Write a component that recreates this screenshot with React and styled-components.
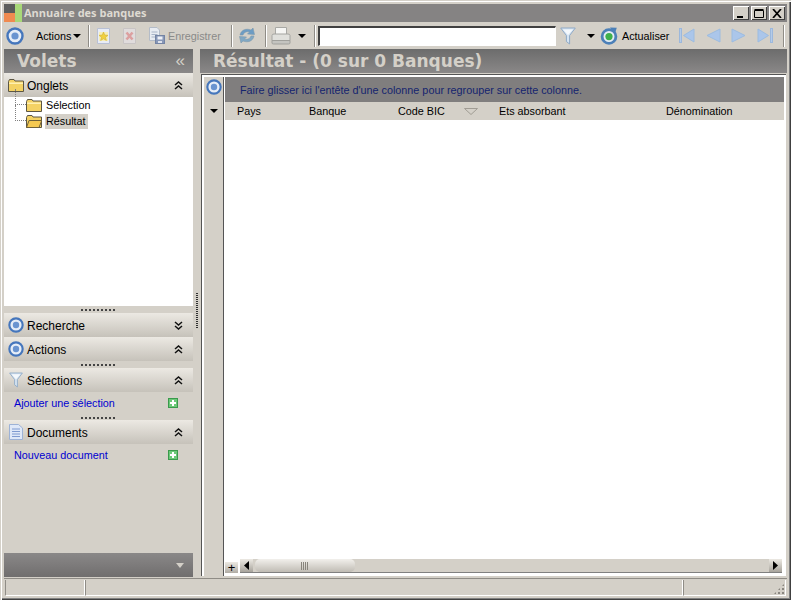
import styled, { createGlobalStyle } from 'styled-components';

const GlobalStyle = createGlobalStyle`
    html, body { margin: 0; padding: 0; background: #d4d0c8; }
    body { font-family: "Liberation Sans", Arial, sans-serif; font-size: 10.8px; color: #000; overflow: hidden; }
`;

const Target = ({ size = 18 }) => (
    <svg width={size} height={size} viewBox="0 0 18 18">
        <circle cx="9" cy="9" r="7.5" fill="#e6edf7" stroke="#4576bc" strokeWidth="2.4" />
        <circle cx="9" cy="9" r="3.6" fill="#6a94d0" />
    </svg>
);

const Folder = ({ open }) => (
    <svg width="16" height="13" viewBox="0 0 16 13">
        <path d="M.5 2.5 L1.5 .5 H6 L7 2 H15.5 V12.5 H.5Z" fill="#f4d264" stroke="#5c5644" />
        {open
            ? <path d="M3 5.5 H15.8 L13 12.5 H.5Z" fill="#f4c850" stroke="#6e6038" />
            : <path d="M1 3.5 H15 V5 H1Z" fill="#fff0b0" />}
    </svg>
);

const Funnel = ({ size = 16 }) => (
    <svg width={size} height={size + 2} viewBox="0 0 16 18">
        <path d="M.7 1 H15.3 L9.6 8.5 V17 L6.4 14.5 V8.5Z" fill="#d6e4f2" stroke="#8fa9c6" />
        <path d="M3 2.5 H13 L8 8Z" fill="#f4f8fc" />
    </svg>
);

const DocIcon = () => (
    <svg width="14" height="16" viewBox="0 0 14 16">
        <path d="M.5 .5 H9.5 L13.5 4 V15.5 H.5Z" fill="#dfe8f8" stroke="#9db2d6" />
        <path d="M3 5 H11 M3 7.5 H11 M3 10 H11 M3 12.5 H11" stroke="#7f9ad0" />
    </svg>
);

const PlusBox = () => (
    <svg width="10" height="10" viewBox="0 0 10 10">
        <rect width="10" height="10" fill="#3a9a4c" />
        <path d="M1 1 H9 V9 H1Z" fill="#6cc878" />
        <path d="M5 2 V8 M2 5 H8" stroke="#fff" strokeWidth="2" />
    </svg>
);

const Chevrons = ({ dir = 'up', color = '#111' }) => (
    <svg width="9" height="9" viewBox="0 0 9 9" style={{ transform: dir === 'up' ? 'none' : 'scaleY(-1)' }}>
        <path d="M1 4 L4.5 1 L8 4 M1 8 L4.5 5 L8 8" fill="none" stroke={color} strokeWidth="1.5" />
    </svg>
);

const Caret = () => (
    <svg width="8" height="4" viewBox="0 0 8 4"><path d="M0 0 H8 L4 4Z" fill="#000" /></svg>
);

const NewDoc = () => (
    <svg width="15" height="16" viewBox="0 0 15 16">
        <path d="M1.5 .5 H13.5 V15.5 H1.5Z" fill="#e8ecf6" stroke="#b8c0d4" />
        <rect x="3" y="4" width="9" height="9" fill="#f6eeb8" />
        <path d="M7.5 4 L8.8 7 L12 7.3 L9.6 9.3 L10.4 12.5 L7.5 10.8 L4.6 12.5 L5.4 9.3 L3 7.3 L6.2 7Z" fill="#f0d040" stroke="#c8a830" strokeWidth=".5" />
    </svg>
);

const DeleteDoc = () => (
    <svg width="15" height="16" viewBox="0 0 15 16">
        <path d="M1.5 .5 H13.5 V15.5 H1.5Z" fill="#e0dcdc" stroke="#c8c4c4" />
        <path d="M4.5 4.5 L10.5 11.5 M10.5 4.5 L4.5 11.5" stroke="#dca0a0" strokeWidth="2.6" />
    </svg>
);

const SaveDocs = () => (
    <svg width="16" height="17" viewBox="0 0 16 17">
        <path d="M.5 .5 H8 L10.5 3 V13.5 H.5Z" fill="#e8ecf2" stroke="#b4bcc8" />
        <path d="M2.5 5 H8.5 M2.5 7.5 H8.5 M2.5 10 H6" stroke="#a8b4c8" />
        <rect x="6.5" y="8.5" width="9" height="8" fill="#8898b8" stroke="#7484a4" />
        <rect x="8.5" y="9.5" width="5" height="3" fill="#eef0f6" />
        <rect x="9" y="14" width="4" height="2" fill="#dfe3ec" />
    </svg>
);

const Sync = () => (
    <svg width="18" height="17" viewBox="0 0 18 17">
        <path d="M2 8 C3 3 8 1 13 3 L15 1 L16.5 7.5 L9.5 7 L11.5 5 C8 4 6 5.5 5 8Z" fill="#6c9cc4" stroke="#7c98ac" strokeWidth=".6" />
        <path d="M16 9 C15 14 10 16 5 14 L3 16 L1.5 9.5 L8.5 10 L6.5 12 C10 13 12 11.5 13 9Z" fill="#80a8c4" stroke="#7c98ac" strokeWidth=".6" />
    </svg>
);

const Printer = () => (
    <svg width="20" height="18" viewBox="0 0 20 18">
        <path d="M4.5 .5 H15.5 V7.5 H4.5Z" fill="#f6f6f4" stroke="#a8a8a4" />
        <path d="M1 8.5 Q1 7 3 7 H17 Q19 7 19 8.5 V13.5 H1Z" fill="#e0e0dc" stroke="#a4a4a0" />
        <path d="M1 13.5 H19 V16 Q19 17 17.5 17 H2.5 Q1 17 1 16Z" fill="#c4c4c0" stroke="#a0a09c" />
    </svg>
);

const Refresh = () => (
    <svg width="18" height="18" viewBox="0 0 18 18">
        <circle cx="9" cy="9.5" r="6.9" fill="#e4ecf4" stroke="#4c80b8" strokeWidth="2.8" />
        <path d="M10 .4 L16.8 .8 L14.8 7Z" fill="#4c80b8" />
        <circle cx="9" cy="9.6" r="3.6" fill="#3eb04c" />
    </svg>
);

const Nav = ({ flip, bar }) => (
    <svg width="16" height="15" viewBox="0 0 16 15" style={{ transform: flip ? 'scaleX(-1)' : 'none' }}>
        {bar && <rect x=".5" y=".5" width="2" height="14" fill="#b4cbe8" stroke="#9cb8dc" />}
        <path d={bar ? 'M15 1 V14 L4.5 7.5Z' : 'M15 1 V14 L2 7.5Z'} fill="#abc6ea" stroke="#9cbce0" />
    </svg>
);

const WinGlyph = ({ kind }) => (
    <svg width="10" height="9" viewBox="0 0 10 9">
        {kind === 'min' && <rect x="1" y="7" width="6" height="2" fill="#000" />}
        {kind === 'max' && <path d="M.5 1.5 H9.5 V8.5 H.5Z M.5 .5 H9.5" fill="none" stroke="#000" />}
        {kind === 'close' && <path d="M1 0 L9 9 M9 0 L1 9" stroke="#000" strokeWidth="1.7" />}
    </svg>
);

const AppIcon = () => (
    <svg width="18" height="18" viewBox="0 0 18 18">
        <rect width="6" height="18" y="0" fill="#5e5e5e" />
        <rect x="0" y="9" width="11" height="9" fill="#f08a50" />
        <rect x="6" y="0" width="5" height="9" fill="#5a5a5a" />
        <rect x="11" y="0" width="7" height="18" fill="#a8d878" />
    </svg>
);

export default function App() {
    return (
        <Window>
            <GlobalStyle />
            <TitleBar>
                <AppIcon />
                <TitleText>Annuaire des banques</TitleText>
                <WinButtons>
                    <WinButton><WinGlyph kind="min" /></WinButton>
                    <WinButton><WinGlyph kind="max" /></WinButton>
                    <WinButton><WinGlyph kind="close" /></WinButton>
                </WinButtons>
            </TitleBar>

            <Toolbar>
                <Tool $at={2}><Target /></Tool>
                <ToolLabel $at={12} $w={36}>Actions</ToolLabel>
                <Tool $at={1}><Caret /></Tool>
                <ToolSep $at={7} />
                <Tool $at={7}><NewDoc /></Tool>
                <Tool $at={11}><DeleteDoc /></Tool>
                <Tool $at={12}><SaveDocs /></Tool>
                <ToolLabel $at={3} $w={54} $muted>Enregistrer</ToolLabel>
                <ToolSep $at={9} />
                <Tool $at={6}><Sync /></Tool>
                <ToolSep $at={9} />
                <Tool $at={5}><Printer /></Tool>
                <Tool $at={7}><Caret /></Tool>
                <ToolSep $at={8} />
                <SearchInput />
                <Tool $at={4}><Funnel /></Tool>
                <Tool $at={11}><Caret /></Tool>
                <Tool $at={5}><Refresh /></Tool>
                <ToolLabel $at={4} $w={48}>Actualiser</ToolLabel>
                <Tool $at={9}><Nav bar /></Tool>
                <Tool $at={10}><Nav /></Tool>
                <Tool $at={10}><Nav flip /></Tool>
                <Tool $at={10}><Nav flip bar /></Tool>
                <ToolSep $at={10} />
            </Toolbar>

            <Main>
                <LeftPane>
                    <PaneHeader>
                        <PaneTitle>Volets</PaneTitle>
                        <Collapse>«</Collapse>
                    </PaneHeader>

                    <Group icon={<Folder />} label="Onglets" />
                    <Tree>
                        <TreeRow>
                            <Folder />
                            <TreeLabel>Sélection</TreeLabel>
                        </TreeRow>
                        <TreeRow>
                            <Folder open />
                            <TreeLabel $selected>Résultat</TreeLabel>
                        </TreeRow>
                    </Tree>

                    <Grip />
                    <Group icon={<Target size={16} />} label="Recherche" dir="down" />
                    <Group icon={<Target size={16} />} label="Actions" />
                    <Grip />
                    <Group icon={<Funnel size={14} />} label="Sélections" />
                    <LinkRow>
                        <PaneLink>Ajouter une sélection</PaneLink>
                        <PlusBox />
                    </LinkRow>
                    <Grip $short />
                    <Group icon={<DocIcon />} label="Documents" />
                    <LinkRow>
                        <PaneLink>Nouveau document</PaneLink>
                        <PlusBox />
                    </LinkRow>

                    <BottomBar>
                        <Arrow />
                    </BottomBar>
                </LeftPane>

                <Splitter><SplitterDots /></Splitter>

                <RightPane>
                    <PaneHeader>
                        <ResultTitle>Résultat - (0 sur 0 Banques)</ResultTitle>
                    </PaneHeader>
                    <GridFrame>
                        <Gutter>
                            <GutterTop><Target size={16} /></GutterTop>
                            <GutterCaret><Caret /></GutterCaret>
                        </Gutter>
                        <GridBody>
                            <GroupPanel>Faire glisser ici l'entête d'une colonne pour regrouper sur cette colonne.</GroupPanel>
                            <HeaderRow>
                                <span>Pays</span>
                                <span>Banque</span>
                                <SortCell>
                                    <span>Code BIC</span>
                                    <SortMark viewBox="0 0 14 7" width="14" height="7">
                                        <path d="M.5 .5 H13.5 L7 6.5Z" fill="#d4d0c8" stroke="#a09c94" />
                                    </SortMark>
                                </SortCell>
                                <span>Ets absorbant</span>
                                <span>Dénomination</span>
                            </HeaderRow>
                            <Rows />
                            <ScrollRow>
                                <ExpandButton>+</ExpandButton>
                                <ScrollBar>
                                    <ScrollButton>
                                        <svg width="5" height="9" viewBox="0 0 5 9"><path d="M5 0 V9 L0 4.5Z" fill="#000" /></svg>
                                    </ScrollButton>
                                    <ScrollThumb>
                                        <ThumbGrip />
                                    </ScrollThumb>
                                    <ScrollTrack />
                                    <ScrollButton>
                                        <svg width="5" height="9" viewBox="0 0 5 9"><path d="M0 0 V9 L5 4.5Z" fill="#000" /></svg>
                                    </ScrollButton>
                                </ScrollBar>
                            </ScrollRow>
                        </GridBody>
                    </GridFrame>
                </RightPane>
            </Main>

            <StatusBar>
                <StatusCell $w={80} />
                <StatusCell $w={598} />
                <StatusCell $w={103}>
                    <ResizeGrip />
                </StatusCell>
            </StatusBar>
        </Window>
    );
}

const Group = ({ icon, label, dir = 'up' }) => (
    <GroupHeader>
        <GroupIcon>{icon}</GroupIcon>
        <GroupLabel>{label}</GroupLabel>
        <Chevrons dir={dir} />
    </GroupHeader>
);

const Window = styled.div`
    box-sizing: border-box;
    width: 791px;
    height: 600px;
    padding: 4px;
    display: flex;
    flex-direction: column;
    background: #d4d0c8;
    box-shadow: inset 1px 1px 0 #d4d0c8, inset 2px 2px 0 #fff, inset -1px -1px 0 #404040, inset -2px -2px 0 #808080;
`;

const TitleBar = styled.div`
    height: 18px;
    flex: none;
    display: flex;
    align-items: center;
    background: #858383;
    color: #d8d4cc;
`;

const TitleText = styled.span`
    margin-left: 2px;
    margin-top: -2px;
    font-family: "Open Sans", "Liberation Sans", sans-serif;
    font-weight: 700;
    font-size: 11px;
    color: #dedad2;
`;

const WinButtons = styled.div`
    margin-left: auto;
    margin-right: 2px;
    display: flex;
    gap: 2px;
`;

const WinButton = styled.div`
    width: 16px;
    height: 14px;
    display: flex;
    align-items: center;
    justify-content: center;
    background: #d4d0c8;
    box-shadow: inset 1px 1px 0 #fff, inset -1px -1px 0 #404040;
`;

const Toolbar = styled.div`
    height: 27px;
    flex: none;
    display: flex;
    align-items: center;
`;

const Tool = styled.div`
    margin-left: ${(p) => p.$at}px;
    display: flex;
    align-items: center;
`;

const ToolLabel = styled.span`
    margin-left: ${(p) => p.$at}px;
    width: ${(p) => p.$w}px;
    color: ${(p) => (p.$muted ? '#8a8a88' : '#000')};
    white-space: nowrap;
`;

const ToolSep = styled.div`
    margin-left: ${(p) => p.$at}px;
    width: 1px;
    height: 22px;
    background: #8f8c86;
    box-shadow: 1px 0 0 #fff;
`;

const SearchInput = styled.div`
    margin-left: 3px;
    box-sizing: border-box;
    width: 238px;
    height: 20px;
    background: #fff;
    border: 1px solid #fff;
    border-top: 2px solid #404040;
    border-left: 2px solid #404040;
`;

const Main = styled.div`
    flex: 1;
    min-height: 0;
    display: flex;
`;

const LeftPane = styled.div`
    width: 189px;
    flex: none;
    display: flex;
    flex-direction: column;
`;

const Splitter = styled.div`
    width: 7px;
    flex: none;
    display: flex;
    align-items: center;
    justify-content: center;
`;

const SplitterDots = styled.div`
    width: 2px;
    height: 36px;
    background: repeating-linear-gradient(to bottom, #303030 0 1px, transparent 1px 2px);
    transform: translateY(-2px);
`;

const RightPane = styled.div`
    flex: 1;
    min-width: 0;
    display: flex;
    flex-direction: column;
`;

const PaneHeader = styled.div`
    height: 24px;
    flex: none;
    display: flex;
    align-items: center;
    background: linear-gradient(to bottom, #6c6c6c, #8a8888);
`;

const PaneTitle = styled.span`
    margin-left: 13px;
    font-family: "DejaVu Sans", sans-serif;
    font-weight: 700;
    font-size: 17px;
    color: #d4d0c8;
`;

const ResultTitle = styled(PaneTitle)``;

const Collapse = styled.span`
    margin-left: auto;
    margin-right: 8px;
    color: #d4d0c8;
    font-size: 17px;
    line-height: 20px;
`;

const GroupHeader = styled.div`
    height: 24px;
    flex: none;
    display: flex;
    align-items: center;
    padding: 0 10px 0 3px;
    background: linear-gradient(to bottom, #ece9e3, #c6c2ba);
`;

const GroupIcon = styled.div`
    width: 18px;
    display: flex;
    align-items: center;
    justify-content: center;
`;

const GroupLabel = styled.span`
    flex: 1;
    margin-left: 2px;
    padding-top: 1px;
    font-size: 12px;
`;

const Tree = styled.div`
    height: 209px;
    flex: none;
    padding-left: 11px;
    background: #fff;
`;

const TreeRow = styled.div`
    position: relative;
    height: 16px;
    display: flex;
    align-items: center;
    padding-left: 11px;
    &::before {
        content: '';
        position: absolute;
        left: 0;
        top: -8px;
        width: 10px;
        height: 15px;
        border-left: 1px dotted #808080;
        border-bottom: 1px dotted #808080;
    }
`;

const TreeLabel = styled.span`
    margin-left: 3px;
    padding: 0 2px 0 1px;
    line-height: 15px;
    background: ${(p) => (p.$selected ? '#d4d0c8' : 'transparent')};
`;

const Grip = styled.div`
    height: ${(p) => (p.$short ? 5 : 7)}px;
    flex: none;
    display: flex;
    align-items: center;
    justify-content: center;
    &::after {
        content: '';
        width: 35px;
        height: 2px;
        background: repeating-linear-gradient(to right, #444 0 2px, transparent 2px 4px);
    }
`;

const LinkRow = styled.div`
    box-sizing: border-box;
    height: 23px;
    flex: none;
    display: flex;
    align-items: center;
    justify-content: space-between;
    padding: 0 15px 2px 10px;
`;

const PaneLink = styled.span`
    color: #0000d0;
`;

const BottomBar = styled.div`
    margin-top: auto;
    height: 24px;
    flex: none;
    display: flex;
    align-items: center;
    justify-content: flex-end;
    padding-right: 9px;
    background: linear-gradient(to bottom, #8a8888, #706e6e);
`;

const Arrow = styled.div`
    width: 0;
    height: 0;
    border-left: 4px solid transparent;
    border-right: 4px solid transparent;
    border-top: 5px solid #d4d0c8;
`;

const GridFrame = styled.div`
    flex: 1;
    min-height: 0;
    margin: 1px;
    display: flex;
    background: #fff;
    border-top: 1px solid #555;
    border-left: 1px solid #555;
    padding: 2px 2px 3px 2px;
`;

const Gutter = styled.div`
    width: 19px;
    flex: none;
    margin-bottom: -3px;
    display: flex;
    flex-direction: column;
    background: #d4d0c8;
    border-right: 1px solid #555;
`;

const GutterTop = styled.div`
    height: 25px;
    display: flex;
    align-items: center;
    justify-content: center;
    transform: translateY(-3px);
`;

const GutterCaret = styled.div`
    height: 18px;
    display: flex;
    align-items: center;
    justify-content: center;
`;

const GridBody = styled.div`
    flex: 1;
    min-width: 0;
    margin-left: 1px;
    display: flex;
    flex-direction: column;
`;

const GroupPanel = styled.div`
    height: 25px;
    flex: none;
    display: flex;
    align-items: center;
    padding-left: 15px;
    background: #807e7e;
    color: #14246e;
`;

const HeaderRow = styled.div`
    height: 18px;
    flex: none;
    display: grid;
    grid-template-columns: 72px 89px 101px 167px 1fr;
    align-items: center;
    padding-left: 12px;
    background: #d4d0c8;
`;

const SortCell = styled.div`
    display: flex;
    align-items: center;
    justify-content: space-between;
    padding-right: 21px;
`;

const SortMark = styled.svg`
    display: block;
`;

const Rows = styled.div`
    flex: 1;
    background: #fff;
`;

const ScrollRow = styled.div`
    height: 14px;
    flex: none;
    display: flex;
    align-items: flex-end;
    background: #fff;
`;

const ExpandButton = styled.div`
    width: 13px;
    height: 11px;
    flex: none;
    line-height: 11px;
    text-align: center;
    font-size: 13px;
    background: linear-gradient(to bottom, #ece9e3, #b0aca4);
`;

const ScrollBar = styled.div`
    flex: 1;
    height: 14px;
    margin: 0 2px;
    display: flex;
    box-sizing: border-box;
    border-bottom: 1px solid #808080;
    background: #d4d0c8;
`;

const ScrollButton = styled.div`
    width: 13px;
    flex: none;
    display: flex;
    align-items: center;
    justify-content: center;
    background: linear-gradient(to bottom, #ece9e3, #a8a49c);
`;

const ScrollThumb = styled.div`
    width: 100px;
    margin-left: 2px;
    flex: none;
    display: flex;
    align-items: center;
    justify-content: center;
    border-radius: 5px;
    background: linear-gradient(to bottom, #f2f0ec, #c0bcb4);
`;

const ThumbGrip = styled.div`
    width: 8px;
    height: 8px;
    background: repeating-linear-gradient(to right, #88847c 0 1px, transparent 1px 2px);
`;

const ScrollTrack = styled.div`
    flex: 1;
`;

const StatusBar = styled.div`
    height: 17px;
    flex: none;
    margin-top: 1px;
    padding-left: 1px;
    display: flex;
    border-top: 1px solid #8f8c86;
`;

const StatusCell = styled.div`
    position: relative;
    box-sizing: border-box;
    width: ${(p) => p.$w}px;
    flex: none;
    border-bottom: 1px solid #fff;
    border-left: 1px solid #8f8c86;
    border-right: 1px solid #fff;
    margin-top: 1px;
`;

const ResizeGrip = styled.div`
    position: absolute;
    right: 0;
    bottom: 0;
    width: 12px;
    height: 12px;
    background: radial-gradient(circle, #8a8680 0 1px, transparent 1px) 0 0 / 4px 4px;
    clip-path: polygon(100% 0, 100% 100%, 0 100%);
`;
